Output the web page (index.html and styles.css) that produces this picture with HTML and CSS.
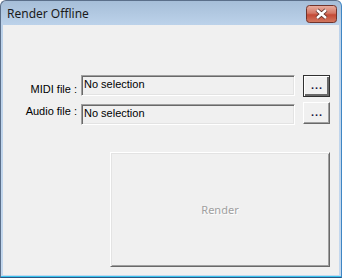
FILE: index.html
```html
<!DOCTYPE html>
<html>
    <head>
        <title>Render Offline</title>
        <link rel="stylesheet" href="styles.css">
    </head>
    <body>
        <div class="window">
            <!--title bar with the close button-->
            <div class="titlebar">
                <span class="title">Render Offline</span>
                <svg class="close" width="31" height="18" viewBox="0 0 31 18">
                    <defs>
                        <linearGradient id="closeGrad" x1="0" y1="0" x2="0" y2="1">
                            <stop offset="0" stop-color="#e9b0a2"/>
                            <stop offset="0.45" stop-color="#d47866"/>
                            <stop offset="0.55" stop-color="#c44a36"/>
                            <stop offset="1" stop-color="#d27a62"/>
                        </linearGradient>
                    </defs>
                    <rect x="0.5" y="0.5" width="30" height="17" rx="3" fill="url(#closeGrad)" stroke="#70342c"/>
                    <path d="M11 5 L20 13 M20 5 L11 13" stroke="#5c2e28" stroke-width="4.2"/>
                    <path d="M11 5 L20 13 M20 5 L11 13" stroke="#ffffff" stroke-width="2.4"/>
                </svg>
            </div>

            <!--dialog body-->
            <div class="client">
                <div class="row">
                    <label class="name">MIDI file :</label>
                    <div class="field">No selection</div>
                    <button class="browse default">...</button>
                </div>
                <div class="row second">
                    <label class="name">Audio file :</label>
                    <div class="field">No selection</div>
                    <button class="browse">...</button>
                </div>
                <button class="render" disabled>Render</button>
            </div>
        </div>
    </body>
</html>
```

FILE: styles.css
```css
body {
margin: 0;
width: 342px;
height: 278px;
overflow: hidden;
font-family: "Liberation Sans", Arial, sans-serif;
font-size: 11px;
}

.window {
box-sizing: border-box;
height: 278px;
display: flex;
flex-direction: column;
border: 1px solid #5b6f8a;
border-right-color: #3f86c4;
border-bottom-color: #2b5684;
border-radius: 6px 6px 0 0;
padding: 0 2px 2px 2px;
background: linear-gradient(#a6bed8, #bcd2ea 24px, #c4d8ee);
box-shadow: inset 0 -1px 0 #38c4ee;
}

.titlebar {
height: 24px;
display: flex;
justify-content: space-between;
align-items: flex-start;
}

.title {
font-family: "Noto Sans", "Open Sans", sans-serif;
font-size: 12px;
color: #1b1b1b;
margin-left: 4px;
margin-top: 4px;
}

.close {
margin-top: 4px;
margin-right: 2px;
}

.client {
flex: 1;
background: #f0f0f0;
padding: 50px 0 0 0;
}

.row {
display: flex;
align-items: flex-start;
height: 22px;
}

.row.second {
margin-top: 5px;
}

.name {
width: 74px;
margin-right: 4px;
text-align: right;
padding-top: 8px;
color: #000;
}

.second .name {
padding-top: 3px;
}

.field {
box-sizing: border-box;
width: 214px;
height: 21px;
margin-right: 8px;
padding: 2px 2px;
border: 1px solid;
border-color: #a0a0a0 #ffffff #ffffff #a0a0a0;
box-shadow: inset 1px 1px 0 #696969, inset -1px -1px 0 #e3e3e3;
color: #000;
}

.second .field {
margin-top: 2px;
}

.browse {
box-sizing: border-box;
width: 27px;
height: 22px;
padding: 0 0 2px 1px;
font-family: inherit;
font-size: 11px;
font-weight: bold;
letter-spacing: 1px;
color: #1a1a40;
background: #f0f0f0;
border: 1px solid;
border-color: #ffffff #696969 #696969 #ffffff;
box-shadow: inset -1px -1px 0 #a0a0a0;
}

.browse.default {
border-color: #303030;
box-shadow: inset 1px 1px 0 #ffffff, inset -2px -2px 0 #696969;
}

.render {
display: block;
box-sizing: border-box;
width: 220px;
height: 115px;
margin: 28px 0 0 107px;
background: #f0f0f0;
font-family: "Noto Sans", "Open Sans", sans-serif;
font-size: 11px;
color: #a0a0a0;
text-shadow: 1px 1px 0 #ffffff;
border: 1px solid;
border-color: #ffffff #696969 #696969 #ffffff;
box-shadow: inset 1px 1px 0 #e3e3e3, inset -1px -1px 0 #a0a0a0;
}
```
